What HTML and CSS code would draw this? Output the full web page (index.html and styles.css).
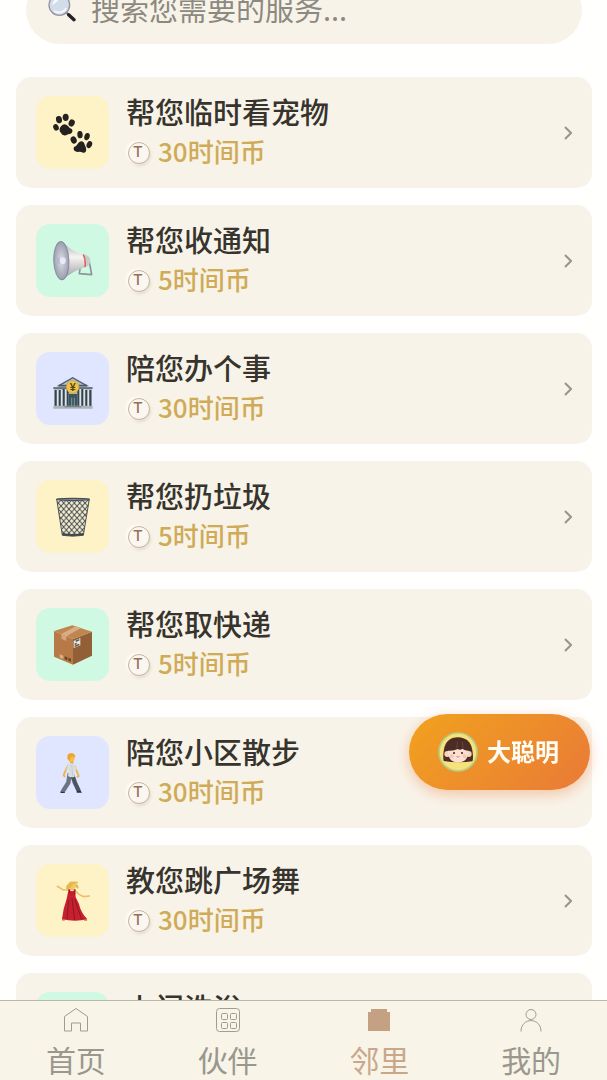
FILE: index.html
```html
<!DOCTYPE html>
<html lang="zh-CN">
<head>
  <meta charset="UTF-8">
  <meta name="viewport" content="width=device-width, initial-scale=1">
  <title>邻里</title>
  <link rel="stylesheet" href="styles.css">
</head>
<body>

  <main class="content">
    <label class="search">
      <svg class="search-icon" viewBox="0 0 84 84" aria-hidden="true">
        <path d="M55 55 L63 63" stroke="#77787f" stroke-width="6"/>
        <path d="M62 62 L78 77" stroke="#222126" stroke-width="10" stroke-linecap="round"/>
        <circle cx="34" cy="33" r="31" fill="#d3dce9" stroke="#94959d" stroke-width="4"/>
        <path d="M12 34 Q16 12 37 11 Q27 26 12 34" fill="#f3f8ff"/>
        <path d="M18 51 Q38 63 55 43" stroke="#f4f7fb" stroke-width="6" fill="none"/>
      </svg>
      <input type="text" placeholder="搜索您需要的服务..." aria-label="搜索">
    </label>

    <div class="service-list">
      <a class="card" href="#">
        <span class="icon yellow">
          <svg viewBox="0 0 120 120" fill="#242220">
            <ellipse cx="9" cy="43" rx="8" ry="10" transform="rotate(-25 9 43)"/>
            <ellipse cx="18" cy="20" rx="9" ry="11" transform="rotate(-12 18 20)"/>
            <ellipse cx="38" cy="13" rx="9" ry="11"/>
            <ellipse cx="56" cy="30" rx="9" ry="11" transform="rotate(25 56 30)"/>
            <path d="M24 40 Q34 28 45 39 Q48 45 57 49 Q61 58 53 62 Q45 62 39 67 Q27 69 24 60 Q15 51 24 40Z"/>
            <ellipse cx="62" cy="81" rx="9" ry="11" transform="rotate(-20 62 81)"/>
            <ellipse cx="81" cy="65" rx="8" ry="11" transform="rotate(-5 81 65)"/>
            <ellipse cx="102" cy="71" rx="8" ry="11" transform="rotate(15 102 71)"/>
            <ellipse cx="109" cy="95" rx="8" ry="11" transform="rotate(25 109 95)"/>
            <path d="M76 90 Q84 80 93 89 L99 105 Q102 120 90 119 Q82 114 73 117 Q58 114 63 102 Q71 99 76 90Z"/>
          </svg>
        </span>
        <span class="info">
          <span class="name">帮您临时看宠物</span>
          <span class="price"><span class="coin">T</span>30时间币</span>
        </span>
        <svg class="arrow" viewBox="0 0 8 14"><path d="M1 1 L7 7 L1 13"/></svg>
      </a>

      <a class="card" href="#">
        <span class="icon green">
          <svg viewBox="0 0 120 120">
            <defs>
              <linearGradient id="horn" x1="0" y1="0" x2="0" y2="1">
                <stop offset="0" stop-color="#a8aaad"/>
                <stop offset=".4" stop-color="#f7f5f2"/>
                <stop offset="1" stop-color="#96999f"/>
              </linearGradient>
              <radialGradient id="mouth">
                <stop offset="0" stop-color="#dcdde8"/>
                <stop offset="1" stop-color="#9a9dae"/>
              </radialGradient>
            </defs>
            <path d="M82 76 L79 98 L116 101 L108 58" fill="none" stroke="#8d9499" stroke-width="5" stroke-linejoin="round"/>
            <path d="M28 2 Q58 34 96 41 L102 77 Q60 88 28 117Z" fill="url(#horn)"/>
            <path d="M96 41 Q111 44 112 58 Q112 72 101 77Z" fill="#c9cbce"/>
            <path d="M91 40 Q99 56 96 78" fill="none" stroke="#d9675c" stroke-width="5"/>
            <ellipse cx="25" cy="59" rx="23" ry="58" transform="rotate(-2 25 59)" fill="url(#mouth)" stroke="#777d89" stroke-width="2"/>
            <path d="M8 53 L29 50 V69 L8 66Z" fill="#b4b8c8"/>
            <ellipse cx="29" cy="59" rx="9" ry="10" fill="#e8eafa"/>
          </svg>
        </span>
        <span class="info">
          <span class="name">帮您收通知</span>
          <span class="price"><span class="coin">T</span>5时间币</span>
        </span>
        <svg class="arrow" viewBox="0 0 8 14"><path d="M1 1 L7 7 L1 13"/></svg>
      </a>

      <a class="card" href="#">
        <span class="icon blue">
          <svg viewBox="0 0 120 120">
            <path d="M3 57 H117 V115 H3Z" fill="#b3bdc5"/>
            <path d="M18 50 L59 26 L101 50Z" fill="#b8c2ca" stroke="#4d5c68" stroke-width="4"/>
            <path d="M1 57 H119 M17 50 H102" stroke="#4c5965" stroke-width="5"/>
            <path d="M8 63 V111 M20 63 V111 M32 60 V111 M44 60 V111 M76 60 V111 M88 60 V111 M100 63 V111 M112 63 V111" stroke="#33434f" stroke-width="6"/>
            <path d="M14 63 V111 M26 63 V111 M38 60 V111 M82 60 V111 M94 60 V111 M106 63 V111" stroke="#dde4e8" stroke-width="4"/>
            <path d="M48 75 H72 V111 H48Z" fill="#3b555e"/>
            <path d="M56 86 V111 M64 86 V111" stroke="#78999f" stroke-width="3"/>
            <path d="M1 110 H119 V119 H1Z" fill="#aab3b5"/>
            <path d="M35 113 H84" stroke="#6d7c7c" stroke-width="3"/>
            <circle cx="59" cy="54" r="19" fill="#f0c445" stroke="#c49d36" stroke-width="2"/>
            <text x="59" y="65" class="yen">¥</text>
          </svg>
        </span>
        <span class="info">
          <span class="name">陪您办个事</span>
          <span class="price"><span class="coin">T</span>30时间币</span>
        </span>
        <svg class="arrow" viewBox="0 0 8 14"><path d="M1 1 L7 7 L1 13"/></svg>
      </a>

      <a class="card" href="#">
        <span class="icon yellow">
          <svg viewBox="0 0 120 120">
            <defs>
              <pattern id="mesh" width="16" height="18" patternUnits="userSpaceOnUse">
                <path d="M0 0 L16 18 M16 0 L0 18" stroke="#4b5055" stroke-width="3"/>
              </pattern>
            </defs>
            <path d="M11 6 H109 L91 115 Q60 120 28 115Z" fill="#f3edcf"/>
            <path d="M11 6 H109 L91 115 Q60 120 28 115Z" fill="url(#mesh)" stroke="#4d535b" stroke-width="3"/>
            <ellipse cx="60" cy="7" rx="49" ry="3" fill="#a3a9aa" stroke="#454d57" stroke-width="4"/>
            <path d="M28 111 Q60 117 91 111" fill="none" stroke="#42474d" stroke-width="6"/>
          </svg>
        </span>
        <span class="info">
          <span class="name">帮您扔垃圾</span>
          <span class="price"><span class="coin">T</span>5时间币</span>
        </span>
        <svg class="arrow" viewBox="0 0 8 14"><path d="M1 1 L7 7 L1 13"/></svg>
      </a>

      <a class="card" href="#">
        <span class="icon green">
          <svg viewBox="0 0 120 120">
            <path d="M3 18 L60 42 V119 L3 95Z" fill="#b77a46"/>
            <path d="M60 42 L117 20 V92 L60 119Z" fill="#925f36"/>
            <path d="M3 18 L58 1 L117 20 L60 42Z" fill="#c08650"/>
            <path d="M25 27 L68 4 L84 9 L40 34Z" fill="#d8ae87"/>
            <path d="M25 27 L40 34 V48 L25 41Z" fill="#d6a478"/>
            <path d="M62 48 L82 39 V61 L62 69Z" fill="#e8e6df"/>
            <path d="M68 49 L79 44 M65 58 L71 55 M65 64 L79 58" stroke="#594e45" stroke-width="4"/>
            <path d="M20 88 L31 92 V102 L20 98Z" fill="#d8af86"/>
            <path d="M35 94 L43 97 V106 L35 103Z M46 98 L54 101 V110 L46 107Z" fill="#65452e"/>
          </svg>
        </span>
        <span class="info">
          <span class="name">帮您取快递</span>
          <span class="price"><span class="coin">T</span>5时间币</span>
        </span>
        <svg class="arrow" viewBox="0 0 8 14"><path d="M1 1 L7 7 L1 13"/></svg>
      </a>

      <a class="card" href="#">
        <span class="icon blue">
          <svg viewBox="0 0 120 120">
            <path d="M47 36 Q38 50 32 66 L36 72 M65 38 L71 54 L77 69 L72 73" fill="none" stroke="#e9b650" stroke-width="6" stroke-linejoin="round"/>
            <path d="M50 61 L46 89 L29 116" fill="none" stroke="#6b7481" stroke-width="13"/>
            <path d="M57 64 L66 90 L78 115" fill="none" stroke="#4a5565" stroke-width="13"/>
            <path d="M23 114 L36 118 L34 121 H22Z M72 113 L83 113 L87 119 H71Z" fill="#293545"/>
            <path d="M51 24 H61 V34 H51Z" fill="#e5a844"/>
            <path d="M49 30 Q63 29 67 39 L72 50 L65 53 V71 Q54 75 45 69 L48 51 L39 52 L45 36Z" fill="#d9dfe1"/>
            <path d="M56 36 L59 70" stroke="#b8c2c8" stroke-width="2"/>
            <ellipse cx="55" cy="14" rx="10" ry="13" fill="#f4bd4c"/>
            <path d="M43 15 Q41 1 55 1 Q67 1 67 14 Q63 10 54 12 L50 23 Q43 22 43 15Z" fill="#eda62b"/>
          </svg>
        </span>
        <span class="info">
          <span class="name">陪您小区散步</span>
          <span class="price"><span class="coin">T</span>30时间币</span>
        </span>
        <svg class="arrow" viewBox="0 0 8 14"><path d="M1 1 L7 7 L1 13"/></svg>
      </a>

      <a class="card" href="#">
        <span class="icon yellow">
          <svg viewBox="0 0 120 120">
            <path d="M50 27 L31 27 L13 16 M68 30 Q81 45 93 47 L109 45" fill="none" stroke="#edbe67" stroke-width="5" stroke-linecap="round"/>
            <path d="M30 107 L29 117 H36 M94 107 L100 118 H93" fill="none" stroke="#d99e4b" stroke-width="4"/>
            <path d="M47 24 Q57 37 66 25 L68 48 L78 69 Q83 94 103 115 Q67 123 27 115 Q30 83 41 53Z" fill="#c6202d"/>
            <path d="M47 57 L42 114 M57 52 L65 117 M66 56 L86 115" stroke="#8f172a" stroke-width="3"/>
            <path d="M48 24 L51 38 M66 24 L65 42" stroke="#9e1729" stroke-width="3"/>
            <path d="M52 18 H63 V28 H52Z" fill="#e7b45e"/>
            <ellipse cx="59" cy="13" rx="10" ry="12" fill="#f0c873"/>
            <path d="M40 25 Q37 13 46 8 Q48 0 60 3 Q75 -1 76 7 Q65 6 58 12 Q56 24 40 25Z" fill="#e7b94b"/>
            <path d="M67 9 Q79 11 76 23 Q69 23 68 16Z" fill="#e7b94b"/>
          </svg>
        </span>
        <span class="info">
          <span class="name">教您跳广场舞</span>
          <span class="price"><span class="coin">T</span>30时间币</span>
        </span>
        <svg class="arrow" viewBox="0 0 8 14"><path d="M1 1 L7 7 L1 13"/></svg>
      </a>

      <a class="card" href="#">
        <span class="icon green"></span>
        <span class="info">
          <span class="name">上门洗浴</span>
          <span class="price"><span class="coin">T</span>30时间币</span>
        </span>
        <svg class="arrow" viewBox="0 0 8 14"><path d="M1 1 L7 7 L1 13"/></svg>
      </a>
    </div>
  </main>

  <button class="assistant" type="button">
    <svg class="avatar" viewBox="0 0 120 120" aria-hidden="true">
      <circle cx="60" cy="60" r="57" fill="#f5e279" stroke="#b7cc8c" stroke-width="5"/>
      <path d="M17 87 Q14 76 18 52 Q24 17 60 16 Q96 17 103 54 Q107 80 103 88 Q60 94 17 87Z" fill="#4b2d25"/>
      <circle cx="28" cy="66" r="9" fill="#f8d2bd"/>
      <circle cx="92" cy="66" r="9" fill="#f8d2bd"/>
      <path d="M30 49 Q60 42 91 49 Q94 91 60 92 Q27 91 30 49Z" fill="#fbdfcf"/>
      <path d="M27 56 Q29 26 60 24 Q91 27 94 56 Q82 57 73 50 Q67 56 59 51 Q48 58 27 56Z" fill="#4b2d25"/>
      <path d="M59 29 L56 48 M73 30 L75 48" stroke="#795143" stroke-width="2"/>
      <circle cx="48" cy="63" r="3" fill="#38231f"/>
      <circle cx="72" cy="63" r="3" fill="#38231f"/>
      <circle cx="41" cy="73" r="6" fill="#f7c4b5"/>
      <circle cx="80" cy="73" r="6" fill="#f7c4b5"/>
      <path d="M55 73 Q60 78 65 73" fill="none" stroke="#bf6158" stroke-width="2"/>
    </svg>
    <span class="assistant-name">大聪明</span>
  </button>

  <nav class="tabbar">
    <a class="tab" href="#">
      <svg viewBox="0 0 26 26"><path d="M1.5 9.5 L13 1.5 L24.5 9.5 V24 H17.5 V16 H8.5 V24 H1.5Z"/></svg>
      首页
    </a>
    <a class="tab" href="#">
      <svg viewBox="0 0 26 26">
        <rect x="1.5" y="1.5" width="23" height="23" rx="3"/>
        <rect x="6.5" y="6.5" width="6" height="6" rx="1"/>
        <rect x="15.5" y="6.5" width="6" height="6" rx="1"/>
        <rect x="6.5" y="15.5" width="6" height="6" rx="1"/>
        <rect x="15.5" y="15.5" width="6" height="6" rx="1"/>
      </svg>
      伙伴
    </a>
    <a class="tab active" href="#">
      <svg viewBox="0 0 26 26"><path d="M5 2 H21 V5 H24 V24 H2 V5 H5Z"/></svg>
      邻里
    </a>
    <a class="tab" href="#">
      <svg viewBox="0 0 26 26"><circle cx="13" cy="7.5" r="5"/><path d="M3 24.5 C3 10 23 10 23 24.5"/></svg>
      我的
    </a>
  </nav>

</body>
</html>
```

FILE: styles.css
```css
* {
  box-sizing: border-box;
}

body {
  margin: 0;
  height: 100vh;
  display: flex;
  flex-direction: column;
  overflow: hidden;
  background-color: #fffffe;
  font-family: "Noto Sans CJK SC", sans-serif;
}

a {
  color: inherit;
  text-decoration: none;
}

.content {
  flex: 1;
  min-height: 0;
  overflow: hidden;
  padding: 0 15px 0 16px;
}

.search {
  display: flex;
  align-items: center;
  gap: 15px;
  height: 68px;
  margin: -24px 10px 33px;
  padding: 0 22px 4px;
  border-radius: 38px;
  background-color: #f8f3e9;
}

.search-icon {
  width: 28px;
  height: 28px;
}

.search input {
  flex: 1;
  min-width: 0;
  padding: 0;
  border: none;
  outline: none;
  background: none;
  font-family: inherit;
  font-size: 29px;
  color: #37332d;
}

.search input::placeholder {
  color: #8c8981;
}

.service-list {
  display: flex;
  flex-direction: column;
  gap: 17px;
}

.card {
  display: flex;
  align-items: center;
  gap: 17px;
  height: 111px;
  flex-shrink: 0;
  padding: 0 20px;
  border-radius: 15px;
  background-color: #f8f3e9;
}

.icon {
  display: flex;
  align-items: center;
  justify-content: center;
  width: 73px;
  height: 73px;
  border-radius: 14px;
}

.icon svg {
  width: 40px;
  height: 40px;
}

.yellow {
  background-color: #fef2c7;
}

.green {
  background-color: #d0f9e4;
}

.blue {
  background-color: #e0e6ff;
}

.yen {
  font-family: "Liberation Sans", sans-serif;
  font-size: 32px;
  font-weight: bold;
  text-anchor: middle;
  fill: #55431f;
}

.info {
  flex: 1;
  padding-bottom: 4px;
}

.name,
.price {
  display: flex;
  align-items: center;
  height: 40px;
  line-height: 40px;
}

.name {
  font-size: 29px;
  font-weight: 500;
  color: #37332d;
}

.price {
  gap: 8px;
  padding-left: 2px;
  font-size: 26px;
  font-weight: 500;
  color: #cfab57;
}

.coin {
  display: flex;
  justify-content: center;
  width: 22px;
  height: 22px;
  margin-top: 4px;
  padding-right: 2px;
  border: 1px solid #c8b39f;
  border-radius: 50%;
  background-color: #faf6f0;
  box-shadow: -2px -1px 3px #fffdf8, 1px 2px 3px #e5dccf;
  font-family: Inter, sans-serif;
  font-size: 15px;
  line-height: 18px;
  color: #967158;
}

.arrow {
  width: 8px;
  height: 14px;
  fill: none;
  stroke: #99958d;
  stroke-width: 2;
}

.assistant {
  position: fixed;
  right: 17px;
  bottom: 290px;
  display: flex;
  align-items: center;
  gap: 9px;
  height: 76px;
  padding: 0 31px 0 29px;
  border: none;
  border-radius: 38px;
  background: linear-gradient(135deg, #f1a21e, #e97a37);
  box-shadow: 0 4px 14px rgba(235, 125, 55, 0.4);
  font-family: inherit;
  font-size: 24px;
  font-weight: bold;
  color: #fffdf4;
}

.assistant-name {
  padding-bottom: 4px;
}

.avatar {
  width: 40px;
  height: 40px;
}

.tabbar {
  display: grid;
  grid-template-columns: repeat(4, 1fr);
  height: 80px;
  border-top: 1px solid #bbb7ac;
  background-color: #f8f4e8;
}

.tab {
  display: flex;
  flex-direction: column;
  align-items: center;
  gap: 6px;
  padding-top: 6px;
  font-size: 30px;
  font-weight: 400;
  line-height: 40px;
  color: #9a978f;
}

.tab svg {
  width: 26px;
  height: 26px;
  fill: none;
  stroke: #a09c92;
  stroke-width: 1;
}

.tab.active {
  color: #c9a78b;
}

.tab.active svg {
  fill: #c5a184;
  stroke: none;
}
```
